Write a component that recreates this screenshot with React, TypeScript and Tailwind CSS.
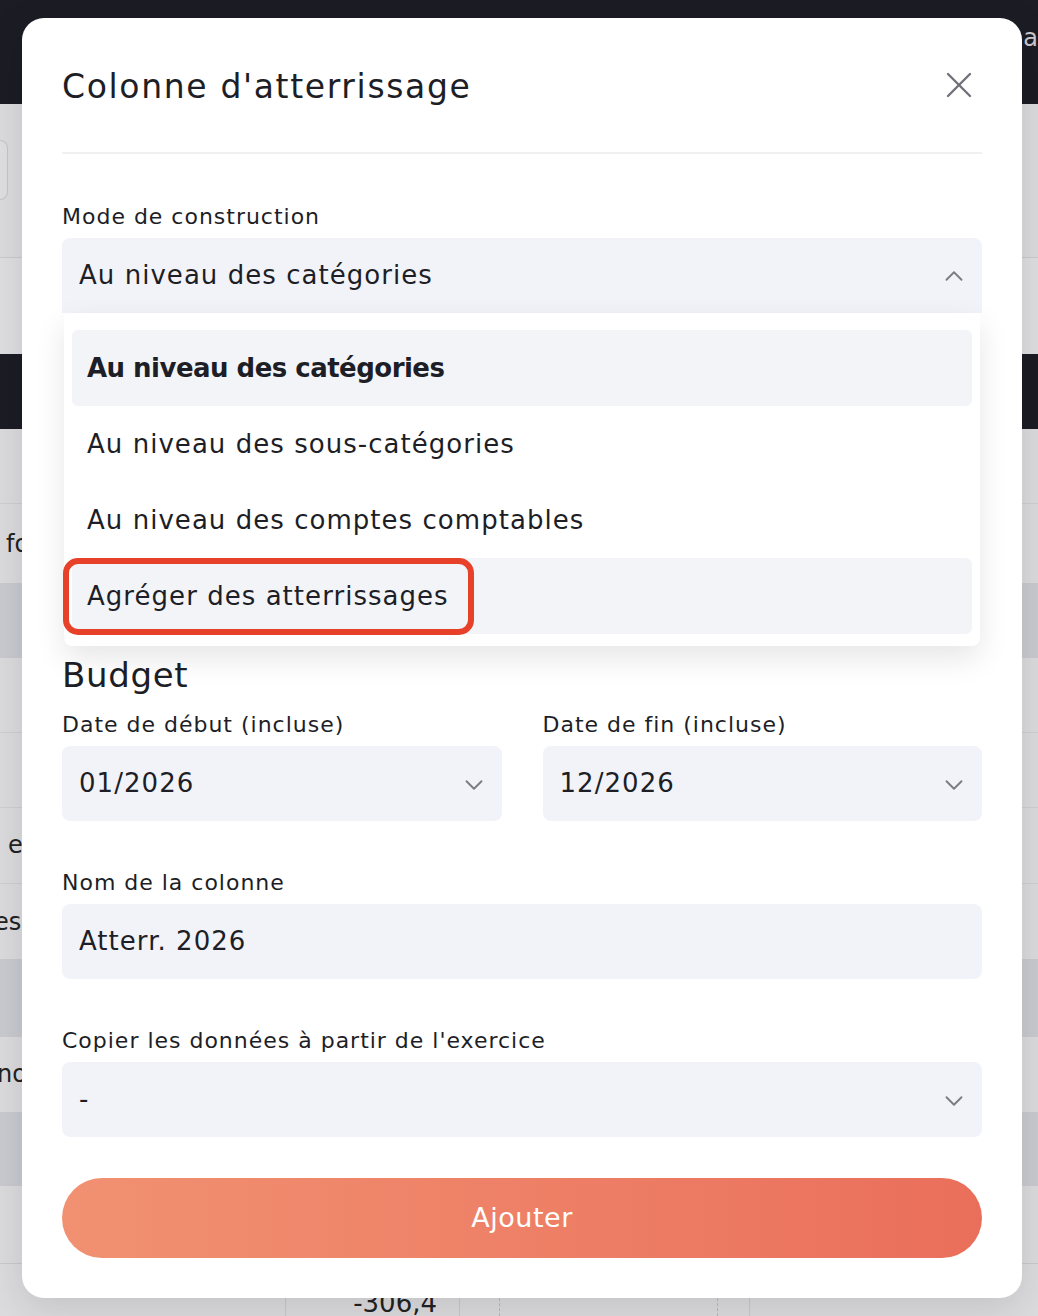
import { ChevronDown, ChevronUp, X } from 'lucide-react';

const font = { fontFamily: '"DejaVu Sans", "Open Sans", sans-serif' };

function Backdrop() {
  return (
    <div className="absolute inset-0 flex flex-col bg-[#dcdcdf]">
      <div className="h-[104px] shrink-0 bg-[#1b1c24] flex justify-end items-start pt-[26px] pr-0">
        <span className="text-[24px] text-[#c9c9cf] leading-none">a</span>
      </div>
      <div className="h-[154px] border-b border-[#cbcbcf] pt-[36px]">
        <div className="w-[8px] h-[60px] rounded-r-lg border border-l-0 border-[#c6c6cb] bg-[#e0e0e3]" />
      </div>
      <div className="h-[97px] bg-[#dfdfe1]" />
      <div className="h-[75px] bg-[#1b1c24]" />
      <div className="h-[75px] border-b border-[#cfcfd2]" />
      <div className="h-[80px] flex items-center text-[24px] text-[#222] -ml-[2px] pl-[8px]">fo</div>
      <div className="h-[75px] bg-[#cacbd0]" />
      <div className="h-[75px] border-b border-[#cfcfd2]" />
      <div className="h-[75px] border-b border-[#cfcfd2]" />
      <div className="h-[77px] flex items-center pl-[8px] text-[24px] text-[#222] border-b border-[#cfcfd2]">e</div>
      <div className="h-[75px] flex items-center -ml-[6px] text-[24px] text-[#222]">es</div>
      <div className="h-[78px] bg-[#cacbd0]" />
      <div className="h-[75px] flex items-center -ml-[3px] text-[24px] text-[#222]">no</div>
      <div className="h-[75px] bg-[#cacbd0]" />
      <div className="h-[78px] border-b border-[#c9c9cd]" />
      <div className="flex-1 flex">
        <div className="w-[286px] border-r border-[#c9c9cd]" />
        <div className="w-[174px] border-r border-[#c9c9cd] flex justify-end items-start pr-[22px] text-[26px] leading-none pt-[26px] text-[#222]">
          -306,4
        </div>
        <div className="w-[40px] border-r border-dashed border-[#b9b9bd]" />
        <div className="w-[218px] border-r border-dashed border-[#b9b9bd]" />
        <div className="w-[32px] border-r border-[#c9c9cd]" />
      </div>
    </div>
  );
}

function Field({ label, value, open, chevron = 'down', className = '' }: { label?: string; value: string; open?: boolean; chevron?: 'down' | 'up' | 'none'; className?: string }) {
  return (
    <div className={className}>
      {label && <div className="text-[22px] leading-[34px] tracking-[0.045em] text-[#1d1e26] mb-[4px]">{label}</div>}
      <div className={`h-[75px] bg-[#f2f3f8] flex items-center justify-between pl-[17px] pr-[13px] ${open ? 'rounded-t-lg' : 'rounded-lg'}`}>
        <span className="text-[26px] tracking-[0.04em] text-[#1d1e26]">{value}</span>
        {chevron === 'down' && <ChevronDown className="w-[30px] h-[30px] text-[#7b7c84] mt-[2px]" strokeWidth={1.5} />}
        {chevron === 'up' && <ChevronUp className="w-[30px] h-[30px] text-[#7b7c84]" strokeWidth={1.5} />}
      </div>
    </div>
  );
}

export default function App() {
  const options = [
    { label: 'Au niveau des catégories', selected: true },
    { label: 'Au niveau des sous-catégories' },
    { label: 'Au niveau des comptes comptables' },
    { label: 'Agréger des atterrissages', hover: true },
  ];

  return (
    <div className="relative w-[1038px] h-[1316px] overflow-hidden" style={font}>
      <Backdrop />
      <div className="absolute left-[22px] top-[18px] w-[1000px] h-[1280px] bg-white rounded-[22px] shadow-[0_10px_40px_rgba(0,0,0,0.12)] px-[40px]">
        <div className="h-[136px] flex items-center justify-between border-b-2 border-[#f0f0f3]">
          <h2 className="text-[33px] tracking-[0.05em] text-[#1d1e26] pt-[4px]">Colonne d'atterrissage</h2>
          <X className="w-[44px] h-[44px] text-[#6f7078] mr-[1px]" strokeWidth={1.3} />
        </div>

        <div className="relative mt-[46px]">
          <Field label="Mode de construction" value="Au niveau des catégories" chevron="up" open />
          <div className="absolute left-[2px] right-[2px] top-[113px] bg-white rounded-b-lg shadow-[0_12px_30px_rgba(0,0,0,0.10)] px-[8px] pt-[17px] pb-[12px] z-10 flex flex-col">
            {options.map((o) => (
              <div
                key={o.label}
                className={`relative h-[76px] flex items-center px-[15px] rounded-md text-[26px] text-[#1d1e26] ${o.selected || o.hover ? 'bg-[#f3f4f8]' : ''} ${o.selected ? 'font-bold tracking-[-0.02em]' : 'tracking-[0.04em]'}`}
              >
                {o.label}
                {o.hover && (
                  <div className="absolute -left-[9px] top-0 w-[411px] h-[77px] border-[6px] border-[#e8412a] rounded-[15px]" />
                )}
              </div>
            ))}
          </div>

          <div className="mt-[342px] text-[34px] leading-[40px] tracking-[0.02em] text-[#1d1e26]">Budget</div>
          <div className="grid grid-cols-2 gap-[41px] mt-[13px]">
            <Field label="Date de début (incluse)" value="01/2026" />
            <Field label="Date de fin (incluse)" value="12/2026" />
          </div>
          <Field className="mt-[45px]" label="Nom de la colonne" value="Atterr. 2026" chevron="none" />
          <Field className="mt-[45px]" label="Copier les données à partir de l'exercice" value="-" />

          <button className="mt-[41px] w-full h-[80px] rounded-full bg-gradient-to-r from-[#f19172] to-[#ea6f5b] text-white text-[27px] tracking-[0.02em]">
            Ajouter
          </button>
        </div>
      </div>
    </div>
  );
}
